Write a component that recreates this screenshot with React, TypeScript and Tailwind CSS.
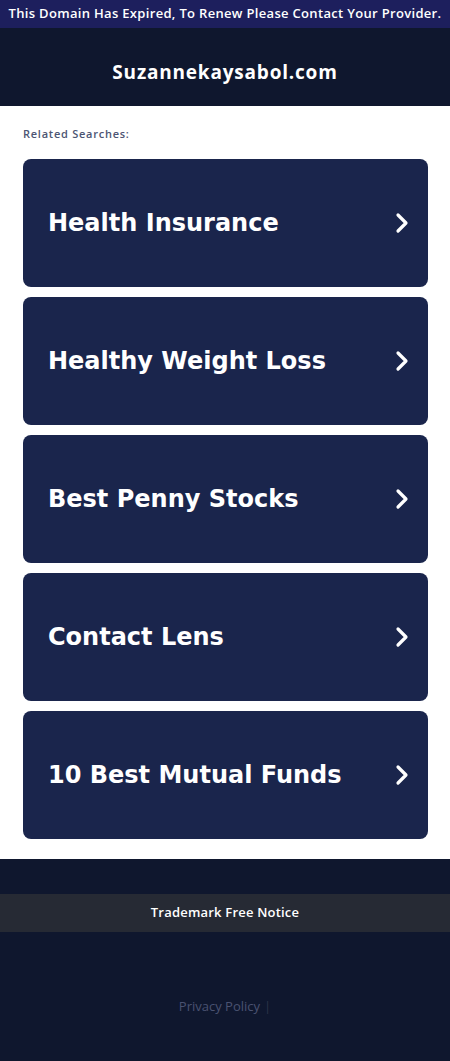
const searches = [
  'Health Insurance',
  'Healthy Weight Loss',
  'Best Penny Stocks',
  'Contact Lens',
  '10 Best Mutual Funds',
];

function Chevron() {
  return (
    <svg width="16" height="22" viewBox="0 0 16 22" fill="none" className="shrink-0">
      <polyline points="4,3 12,11 4,19" stroke="white" strokeWidth="3.2" strokeLinecap="round" strokeLinejoin="round" />
    </svg>
  );
}

export default function App() {
  return (
    <div className="w-[450px] min-h-[1061px] flex flex-col bg-[#0f172e] font-['Open_Sans',sans-serif]">
      {/* Expired notice */}
      <div className="h-[28px] bg-[#1d1f5d] flex items-center justify-center">
        <span className="text-[13px] text-white font-['Open_Sans',sans-serif] font-semibold tracking-[0.32px] whitespace-nowrap">
          This Domain Has Expired, To Renew Please Contact Your Provider.
        </span>
      </div>

      {/* Domain header */}
      <div className="h-[78px] bg-[#0f172e] flex items-center justify-center pt-[10px]">
        <h1 className="text-[19px] font-bold text-white font-['Open_Sans',sans-serif] tracking-[0.8px]">Suzannekaysabol.com</h1>
      </div>

      {/* Related searches */}
      <div className="bg-white pl-[23px] pr-[22px] pt-[20px] pb-[20px]">
        <p className="text-[11px] text-[#4c5573] font-['Open_Sans',sans-serif] font-semibold mb-[16px] tracking-[0.75px]">Related Searches:</p>
        <div className="flex flex-col gap-[10px]">
          {searches.map((s) => (
            <a
              key={s}
              href="#"
              className="h-[128px] rounded-[8px] bg-[#1a254c] flex items-center justify-between pl-[25px] pr-[18px]"
            >
              <span className="text-[24px] font-bold text-white font-['DejaVu_Sans',sans-serif]">{s}</span>
              <Chevron />
            </a>
          ))}
        </div>
      </div>

      {/* Footer */}
      <div className="flex-1 bg-[#0f172e] pt-[35px]">
        <div className="h-[38px] bg-[#262a34] flex items-center justify-center">
          <span className="text-[13px] text-white font-['Open_Sans',sans-serif] font-semibold tracking-[0.2px]">Trademark Free Notice</span>
        </div>
        <div className="flex justify-center items-center gap-[4px] pt-[65px]">
          <span className="text-[13px] text-[#4a5271]">Privacy Policy</span>
          <span className="text-[13px] text-[#2c3349]">|</span>
        </div>
      </div>
    </div>
  );
}
